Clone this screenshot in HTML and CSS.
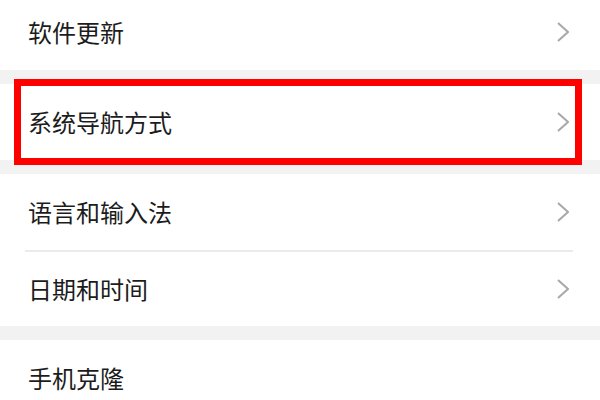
FILE: index.html
```html
<!DOCTYPE html>
<html lang="zh-CN">
<head>
<meta charset="utf-8">
<title>设置</title>
<link rel="stylesheet" href="styles.css">
</head>
<body>
<div class="list">
  <div class="row first">
    <span class="label">软件更新</span>
    <svg class="chev" width="12" height="20" viewBox="0 0 12 20"><polyline points="1,1 11,10 1,19" fill="none" stroke="#a8a8a8" stroke-width="2"/></svg>
  </div>
  <div class="gap"></div>
  <div class="row highlighted">
    <span class="label">系统导航方式</span>
    <svg class="chev" width="12" height="20" viewBox="0 0 12 20"><polyline points="1,1 11,10 1,19" fill="none" stroke="#a8a8a8" stroke-width="2"/></svg>
    <div class="mark"></div>
  </div>
  <div class="gap"></div>
  <div class="row">
    <span class="label">语言和输入法</span>
    <svg class="chev" width="12" height="20" viewBox="0 0 12 20"><polyline points="1,1 11,10 1,19" fill="none" stroke="#a8a8a8" stroke-width="2"/></svg>
  </div>
  <div class="divider"></div>
  <div class="row short">
    <span class="label">日期和时间</span>
    <svg class="chev" width="12" height="20" viewBox="0 0 12 20"><polyline points="1,1 11,10 1,19" fill="none" stroke="#a8a8a8" stroke-width="2"/></svg>
  </div>
  <div class="gap"></div>
  <div class="row">
    <span class="label">手机克隆</span>
  </div>
</div>
</body>
</html>
```

FILE: styles.css
```css
html, body {
  margin: 0;
  padding: 0;
  background: #ffffff;
  overflow: hidden;
}
body {
  width: 600px;
  height: 400px;
  font-family: "Noto Sans CJK SC", "Noto Sans", sans-serif;
  color: #1c1c1c;
}
.list {
  display: flex;
  flex-direction: column;
  margin-top: -6px;
}
.row {
  position: relative;
  height: 76px;
  display: flex;
  align-items: center;
  justify-content: space-between;
  padding: 0 31px 0 28px;
  background: #ffffff;
  flex-shrink: 0;
}
.row.short {
  height: 74px;
}
.label {
  font-size: 24px;
  line-height: 1;
  letter-spacing: 0;
}
.chev {
  display: block;
}
.gap {
  height: 14px;
  background: #f2f2f2;
  flex-shrink: 0;
}
.divider {
  height: 2px;
  margin: 0 27px 0 25px;
  background: #ebebeb;
  flex-shrink: 0;
}
.mark {
  position: absolute;
  left: 14px;
  top: -5px;
  width: 568px;
  height: 86px;
  box-sizing: border-box;
  border: 7px solid #ff0000;
  z-index: 2;
}
```
